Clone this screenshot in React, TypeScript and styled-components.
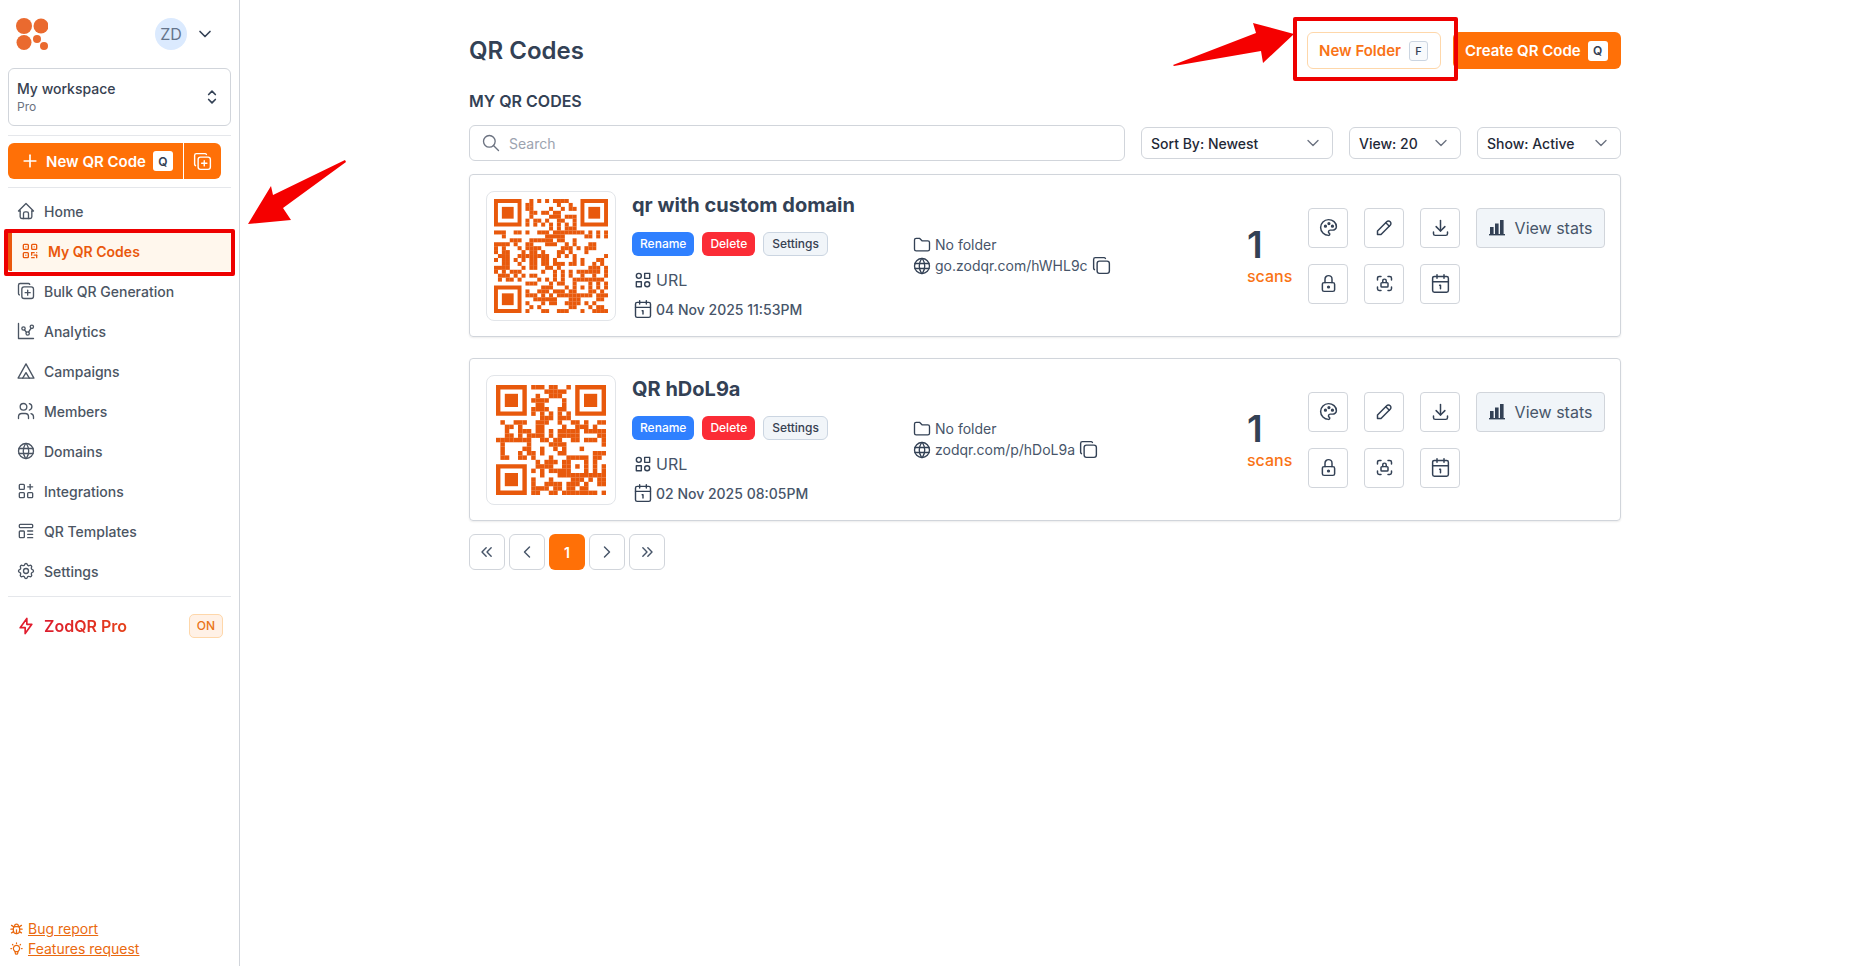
import React from "react";
import styled, { createGlobalStyle } from "styled-components";
import { Calendar1 } from "lucide-react";
import {
  TbHome, TbQrcode, TbCopyPlus, TbChartDots, TbUsers, TbWorld, TbApps, TbTemplate,
  TbSettings, TbBolt, TbBug, TbBulb, TbSelector, TbChevronDown, TbSearch, TbCategory2, TbPalette, TbPencil,
  TbDownload, TbLock, TbLockAccess, TbCopy, TbFolder, TbChevronsLeft, TbChevronsRight, TbChevronLeft, TbChevronRight, TbPlus,
} from "react-icons/tb";

const Global = createGlobalStyle`
  html, body { margin: 0; padding: 0; background: #fff; }
  body { font-family: Inter, "Noto Sans", "Liberation Sans", sans-serif; color: #334155; }
  * { box-sizing: border-box; }
`;

const Page = styled.div`display: flex; height: 100vh; position: relative; overflow: hidden;`;

const Sidebar = styled.aside`
  width: 240px; flex: none; height: 100%; border-right: 1px solid #d1d5db;
  padding: 18px 8px 8px; display: flex; flex-direction: column;
`;
const TopRow = styled.div`display: flex; align-items: center; height: 32px; padding-left: 8px;`;
const Avatar = styled.div`
  width: 32px; height: 32px; border-radius: 50%; background: #dbeafe; color: #64748b; font-size: 16px;
  display: flex; align-items: center; justify-content: center; margin-left: 107px;
`;
const TopChevron = styled.span`display: flex; margin-left: 8px; color: #334155; font-size: 20px;`;
const Workspace = styled.div`
  margin-top: 18px; height: 58px; border: 1px solid #d1d5db; border-radius: 6px; padding: 0 8px;
  display: flex; align-items: center; justify-content: space-between;
`;
const WorkspaceText = styled.div`display: flex; flex-direction: column;`;
const WorkspaceName = styled.span`font-size: 14px; font-weight: 500; line-height: 20px; color: #374151;`;
const WorkspacePlan = styled.span`font-size: 12px; line-height: 16px; color: #6b7280;`;
const Selector = styled.span`display: flex; font-size: 20px; color: #334155;`;
const Divider = styled.hr<{ $top: number; $bottom: number }>`
  border: 0; border-top: 1px solid #e5e7eb; margin: ${(p) => p.$top}px 0 ${(p) => p.$bottom}px; width: 100%;
`;
const NewRow = styled.div`
  width: 213px; height: 36px; display: flex; background: #ff7007; border-radius: 6px; color: #fff; flex: none;
`;
const NewMain = styled.div`
  width: 176px; display: flex; align-items: center; padding-left: 12px; border-right: 1px solid #fff;
  font-size: 15px; font-weight: 600; white-space: nowrap;
  svg { font-size: 20px; stroke-width: 2; margin-right: 6px; flex: none; }
`;
const NewSide = styled.div`flex: 1; display: flex; align-items: center; justify-content: center; font-size: 21px; svg { stroke-width: 1.6; }`;
const KeyCap = styled.span`
  display: flex; align-items: center; justify-content: center; width: 20px; height: 20px; border-radius: 3px;
  background: #fff; color: #334155; font-size: 12px; font-weight: 600; margin-left: 7px; flex: none;
`;
const Nav = styled.nav`display: flex; flex-direction: column; margin-top: 3px;`;
const NavItem = styled.div<{ $active?: boolean }>`
  height: 40px; display: flex; align-items: center; gap: 8px; font-size: 14px; padding-left: 8px;
  font-weight: ${(p) => (p.$active ? 600 : 500)};
  color: ${(p) => (p.$active ? "#ea580c" : "#4b5563")};
  background: ${(p) => (p.$active ? "#fff7ed" : "transparent")};
  border-left: ${(p) => (p.$active ? "4px solid #ea580c" : "0")};
  border-radius: 2px;
  svg { width: 20px; height: 20px; stroke-width: 1.6; flex: none; }
`;
const ProRow = styled.div`display: flex; align-items: center; height: 40px; padding: 1px 8px 0 8px; gap: 8px;`;
const ProIcon = styled.span`display: flex; color: #e11d2e; font-size: 20px; svg { stroke-width: 2; }`;
const ProText = styled.span`
  font-size: 16px; font-weight: 600; flex: 1;
  background: linear-gradient(90deg, #dc1c2e, #ea580c); -webkit-background-clip: text; background-clip: text; color: transparent;
`;
const OnBadge = styled.span`
  width: 34px; height: 24px; border-radius: 5px; background: #fff1e6; border: 1px solid #fed7aa; color: #ea7317;
  font-size: 12px; font-weight: 500; display: flex; align-items: center; justify-content: center;
`;
const FootLinks = styled.div`margin-top: auto; display: flex; flex-direction: column;`;
const FootLink = styled.a`
  display: flex; align-items: center; gap: 4px; font-size: 14px; line-height: 19.5px; color: #ea6a10;
  text-decoration: underline; padding-left: 1px;
  svg { font-size: 15px; stroke-width: 2; flex: none; }
`;

const Main = styled.main`flex: 1; display: flex; justify-content: center; min-width: 0;`;
const Content = styled.div`width: 1152px; padding-top: 32px; display: flex; flex-direction: column;`;
const Header = styled.header`display: flex; align-items: center; height: 37px;`;
const Title = styled.h1`margin: 0; font-size: 24px; font-weight: 600; color: #334155; flex: 1;`;
const FolderBtn = styled.div`
  width: 134px; height: 37px; border: 1px solid #fed7aa; border-radius: 6px; display: flex; align-items: center;
  padding-left: 11px; font-size: 15px; font-weight: 600; color: #f97316; background: #fff; margin-right: 12px; white-space: nowrap;
`;
const FolderKey = styled.span`
  width: 19px; height: 20px; border: 1px solid #cbd5e1; border-radius: 3px; background: #f8fafc; color: #334155;
  font-size: 11px; font-weight: 500; display: flex; align-items: center; justify-content: center; margin-left: 8px;
`;
const CreateBtn = styled.div`
  width: 168px; height: 37px; background: #ff7007; border-radius: 6px; display: flex; align-items: center;
  padding-left: 12px; color: #fff; font-size: 15px; font-weight: 600; white-space: nowrap;
`;
const SubTitle = styled.h2`margin: 21px 0 0; font-size: 16px; line-height: 22px; font-weight: 600; color: #334155; text-transform: uppercase;`;
const Toolbar = styled.div`display: flex; align-items: center; height: 36px; margin-top: 13px;`;
const Search = styled.div`
  width: 656px; height: 36px; border: 1px solid #d1d5db; border-radius: 6px; display: flex; align-items: center;
  padding-left: 11px; gap: 8px; color: #9ca3af; font-size: 14px; margin-right: 16px;
  svg { font-size: 20px; color: #6b7280; stroke-width: 1.6; }
`;
const Select = styled.div<{ $w: number; $gap: number }>`
  width: ${(p) => p.$w}px; margin-right: ${(p) => p.$gap}px; height: 32px; border: 1px solid #d1d5db; border-radius: 6px;
  display: flex; align-items: center; justify-content: space-between; padding: 0 9px 0 9px;
  font-size: 14px; font-weight: 500; color: #1f2937;
  svg { font-size: 20px; color: #6b7280; stroke-width: 1.6; }
`;
const Card = styled.article`
  height: 163px; margin-top: 13px; border: 1px solid #d1d5db; border-radius: 4px; box-shadow: 0 1px 2px rgba(0,0,0,.08);
  display: flex; align-items: center; padding-left: 16px;
  & + & { margin-top: 21px; }
`;
const QrBox = styled.div`
  width: 130px; height: 130px; border: 1px solid #e2e5e9; border-radius: 8px; display: flex; align-items: center; justify-content: center; flex: none;
`;
const Info = styled.div`width: 280px; margin-left: 16px; flex: none; height: 130px; display: flex; flex-direction: column;`;
const CardTitle = styled.h3`margin: 0; font-size: 20px; line-height: 28px; font-weight: 700; color: #334155;`;
const Chips = styled.div`display: flex; gap: 8px; margin-top: 13px;`;
const Chip = styled.span<{ $kind: "blue" | "red" | "gray" }>`
  height: 24px; padding: 0 8px; border-radius: 6px; font-size: 12px; font-weight: 500; display: flex; align-items: center;
  color: ${(p) => (p.$kind === "gray" ? "#374151" : "#fff")};
  background: ${(p) => (p.$kind === "blue" ? "#2f80ff" : p.$kind === "red" ? "#fb2c36" : "#f1f5f9")};
  border: ${(p) => (p.$kind === "gray" ? "1px solid #cbd5e1" : "0")};
`;
const TypeRow = styled.div`
  display: flex; align-items: center; gap: 3px; margin-top: 13px; height: 24px; font-size: 16px; color: #475569; padding-left: 1px;
  svg { font-size: 20px; color: #334155; stroke-width: 1.7; flex: none; }
`;
const DateRow = styled.div`
  display: flex; align-items: center; gap: 3px; margin-top: 7px; height: 24px; font-size: 14px; font-weight: 500; color: #475569; padding-left: 1px;
  svg { width: 20px; height: 20px; color: #334155; stroke-width: 1.7; flex: none; }
`;
const Meta = styled.div`width: 335px; flex: none; display: flex; flex-direction: column;`;
const MetaRow = styled.div`
  display: flex; align-items: center; gap: 3px; font-size: 14px; line-height: 20px; color: #475569; white-space: nowrap;
  svg { font-size: 20px; color: #334155; stroke-width: 1.6; flex: none; }
`;
const CopyMark = styled.span`display: flex; svg { font-size: 21px; }`;
const Scans = styled.div`width: 61px; flex: none; display: flex; flex-direction: column; margin-bottom: 2px;`;
const ScanCount = styled.span`font-size: 37px; line-height: 42px; font-weight: 600; color: #334155;`;
const ScanLabel = styled.span`font-size: 16px; line-height: 20px; font-weight: 500; color: #f97316;`;
const Actions = styled.div`display: grid; grid-template-columns: repeat(3, 40px); gap: 16px; flex: none;`;
const IconBtn = styled.div`
  width: 40px; height: 40px; border: 1px solid #d1d5db; border-radius: 4px; background: #fff; display: flex; align-items: center; justify-content: center;
  font-size: 21px; color: #334155; svg { stroke-width: 1.7; }
`;
const StatsBtn = styled.div`
  width: 129px; height: 40px; margin-left: 16px; align-self: flex-start; background: #f1f5f9; border: 1px solid #d1d5db; border-radius: 4px;
  display: flex; align-items: center; justify-content: center; gap: 9px; font-size: 16px; color: #475569;
`;
const ActionsWrap = styled.div`display: flex; flex: none;`;
const Pager = styled.div`display: flex; gap: 4px; margin-top: 13px;`;
const PageBtn = styled.div<{ $on?: boolean }>`
  width: 36px; height: 36px; border-radius: 6px; display: flex; align-items: center; justify-content: center;
  border: ${(p) => (p.$on ? "0" : "1px solid #d1d5db")};
  background: ${(p) => (p.$on ? "#ff7007" : "#fff")};
  color: ${(p) => (p.$on ? "#fff" : "#475569")};
  font-size: ${(p) => (p.$on ? "14px" : "20px")}; font-weight: 600;
  svg { stroke-width: 1.7; }
`;
const RedFrame = styled.div<{ $l: number; $t: number; $w: number; $h: number }>`
  position: absolute; left: ${(p) => p.$l}px; top: ${(p) => p.$t}px; width: ${(p) => p.$w}px; height: ${(p) => p.$h}px;
  border: 4px solid #ee0000; border-radius: 2px; pointer-events: none;
`;
const Annotation = styled.svg`position: absolute; left: 0; top: 0; width: 1850px; height: 966px; pointer-events: none;`;

function Logo() {
  return (
    <svg width="32" height="32" viewBox="0 0 32 32" fill="#ea6a2f">
      <circle cx="8" cy="8" r="8" /><circle cx="25" cy="8" r="7.5" /><circle cx="8" cy="24.5" r="7.5" />
      <circle cx="21" cy="21" r="4" /><circle cx="28" cy="28" r="4" />
    </svg>
  );
}
function Bars() {
  return (
    <svg width="17" height="17" viewBox="0 0 17 17" fill="#334155">
      <rect x="1" y="8" width="3.6" height="7" /><rect x="6" y="4.5" width="3.6" height="10.5" /><rect x="11" y="1" width="3.6" height="14" />
      <rect x="0" y="15" width="16" height="1.4" />
    </svg>
  );
}
function CampaignIcon() {
  return (
    <svg viewBox="0 0 24 24" fill="none" stroke="currentColor" strokeLinecap="round" strokeLinejoin="round">
      <path d="M12 3.5 L21.5 20.5 H2.5 Z" />
      <path d="M8 20.5 L12 14 L16 20.5" />
    </svg>
  );
}

function inFinder(x: number, y: number, n: number) {
  return (x < 8 && y < 8) || (x >= n - 8 && y < 8) || (x < 8 && y >= n - 8);
}
function Qr({ n, size, seed }: { n: number; size: number; seed: number }) {
  const rects: React.ReactNode[] = [];
  let s = seed;
  const rnd = () => { s = (s * 1664525 + 1013904223) >>> 0; return (s >>> 16) / 65536; };
  const finder = (ox: number, oy: number) => {
    rects.push(<path key={`f${ox}${oy}`} fillRule="evenodd" d={`M${ox} ${oy}h7v7h-7zM${ox + 1} ${oy + 1}v5h5v-5z`} />);
    rects.push(<rect key={`c${ox}${oy}`} x={ox + 2} y={oy + 2} width="3" height="3" />);
  };
  finder(0, 0); finder(n - 7, 0); finder(0, n - 7);
  const ax = n - 7;
  for (let y = 0; y < n; y++) for (let x = 0; x < n; x++) {
    const v = rnd();
    if (inFinder(x, y, n)) continue;
    const dx = x - ax, dy = y - ax;
    if (Math.abs(dx) <= 2 && Math.abs(dy) <= 2) {
      const ring = Math.max(Math.abs(dx), Math.abs(dy));
      if (ring !== 1) rects.push(<rect key={`a${x}-${y}`} x={x} y={y} width="1.02" height="1.02" />);
      continue;
    }
    if (y === 6 || x === 6) { if ((x + y) % 2 === 0) rects.push(<rect key={`t${x}-${y}`} x={x} y={y} width="1.02" height="1.02" />); continue; }
    if (v < 0.52) rects.push(<rect key={`${x}-${y}`} x={x} y={y} width="1.02" height="1.02" />);
  }
  return <svg width={size} height={size} viewBox={`0 0 ${n} ${n}`} fill="#e8590c" shapeRendering="geometricPrecision">{rects}</svg>;
}

const navItems: [string, React.ReactNode, boolean?][] = [
  ["Home", <TbHome />],
  ["My QR Codes", <TbQrcode />, true],
  ["Bulk QR Generation", <TbCopyPlus />],
  ["Analytics", <TbChartDots />],
  ["Campaigns", <CampaignIcon />],
  ["Members", <TbUsers />],
  ["Domains", <TbWorld />],
  ["Integrations", <TbApps />],
  ["QR Templates", <TbTemplate />],
  ["Settings", <TbSettings />],
];

const cards = [
  { title: "qr with custom domain", date: "04 Nov 2025 11:53PM", link: "go.zodqr.com/hWHL9c", n: 29, size: 114, seed: 77 },
  { title: "QR hDoL9a", date: "02 Nov 2025 08:05PM", link: "zodqr.com/p/hDoL9a", n: 25, size: 110, seed: 4242 },
];

export default function App() {
  return (
    <Page>
      <Global />
      <Sidebar>
        <TopRow>
          <Logo />
          <Avatar>ZD</Avatar>
          <TopChevron><TbChevronDown /></TopChevron>
        </TopRow>
        <Workspace>
          <WorkspaceText>
            <WorkspaceName>My workspace</WorkspaceName>
            <WorkspacePlan>Pro</WorkspacePlan>
          </WorkspaceText>
          <Selector><TbSelector /></Selector>
        </Workspace>
        <Divider $top={9} $bottom={7} />
        <NewRow>
          <NewMain><TbPlus />New QR Code<KeyCap>Q</KeyCap></NewMain>
          <NewSide><TbCopyPlus /></NewSide>
        </NewRow>
        <Divider $top={8} $bottom={0} />
        <Nav>
          {navItems.map(([label, icon, active]) => (
            <NavItem key={label} $active={active}>{icon}{label}</NavItem>
          ))}
        </Nav>
        <Divider $top={5} $bottom={8} />
        <ProRow>
          <ProIcon><TbBolt /></ProIcon>
          <ProText>ZodQR Pro</ProText>
          <OnBadge>ON</OnBadge>
        </ProRow>
        <FootLinks>
          <FootLink><TbBug />Bug report</FootLink>
          <FootLink><TbBulb />Features request</FootLink>
        </FootLinks>
      </Sidebar>
      <Main>
        <Content>
          <Header>
            <Title>QR Codes</Title>
            <FolderBtn>New Folder<FolderKey>F</FolderKey></FolderBtn>
            <CreateBtn>Create QR Code<KeyCap>Q</KeyCap></CreateBtn>
          </Header>
          <SubTitle>My QR Codes</SubTitle>
          <Toolbar>
            <Search><TbSearch />Search</Search>
            <Select $w={192} $gap={16}>Sort By: Newest<TbChevronDown /></Select>
            <Select $w={112} $gap={16}>View: 20<TbChevronDown /></Select>
            <Select $w={144} $gap={0}>Show: Active<TbChevronDown /></Select>
          </Toolbar>
          {cards.map((c) => (
            <Card key={c.title}>
              <QrBox><Qr n={c.n} size={c.size} seed={c.seed} /></QrBox>
              <Info>
                <CardTitle>{c.title}</CardTitle>
                <Chips>
                  <Chip $kind="blue">Rename</Chip>
                  <Chip $kind="red">Delete</Chip>
                  <Chip $kind="gray">Settings</Chip>
                </Chips>
                <TypeRow><TbCategory2 />URL</TypeRow>
                <DateRow><Calendar1 />{c.date}</DateRow>
              </Info>
              <Meta>
                <MetaRow><TbFolder />No folder</MetaRow>
                <MetaRow><TbWorld />{c.link}<CopyMark><TbCopy /></CopyMark></MetaRow>
              </Meta>
              <Scans>
                <ScanCount>1</ScanCount>
                <ScanLabel>scans</ScanLabel>
              </Scans>
              <ActionsWrap>
                <Actions>
                  <IconBtn><TbPalette /></IconBtn>
                  <IconBtn><TbPencil /></IconBtn>
                  <IconBtn><TbDownload /></IconBtn>
                  <IconBtn><TbLock /></IconBtn>
                  <IconBtn><TbLockAccess /></IconBtn>
                  <IconBtn><Calendar1 size={21} /></IconBtn>
                </Actions>
                <StatsBtn><Bars />View stats</StatsBtn>
              </ActionsWrap>
            </Card>
          ))}
          <Pager>
            <PageBtn><TbChevronsLeft /></PageBtn>
            <PageBtn><TbChevronLeft /></PageBtn>
            <PageBtn $on>1</PageBtn>
            <PageBtn><TbChevronRight /></PageBtn>
            <PageBtn><TbChevronsRight /></PageBtn>
          </Pager>
        </Content>
      </Main>
      <RedFrame $l={4} $t={229} $w={231} $h={47} />
      <RedFrame $l={1293} $t={17} $w={165} $h={64} />
      <Annotation viewBox="0 0 1850 966">
        <polygon fill="#f50000" points="248,224 271,186 273,195 345,160 346,162 283,208 291,220" />
        <polygon fill="#f50000" points="1173,65 1256,33 1253,23 1294,34 1263,63 1261,51 1174,66" />
      </Annotation>
    </Page>
  );
}
